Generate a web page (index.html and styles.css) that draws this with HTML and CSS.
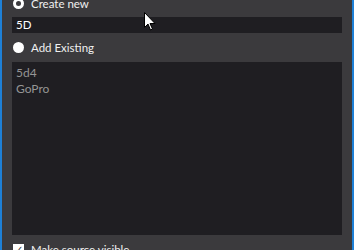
FILE: index.html
```html
<!DOCTYPE html>
<html lang="en">
<head>
    <meta charset="UTF-8">
    <title>Source picker</title>
    <link rel="stylesheet" href="styles.css">
</head>
<body>
    <div class="panel">
        <label class="option first">
            <span class="radio ring"></span>
            <span>Create new</span>
        </label>
        <div class="field">5D</div>

        <label class="option existing">
            <span class="radio dot"></span>
            <span>Add Existing</span>
        </label>
        <div class="list">
            <div class="item">5d4</div>
            <div class="item">GoPro</div>
        </div>

        <label class="option check-row">
            <span class="check">&#10003;</span>
            <span>Make source visible</span>
        </label>

        <!-- mouse pointer captured in the screenshot -->
        <svg class="cursor" width="12" height="19" viewBox="0 0 12 19">
            <path d="M0.5 0.5 L0.5 15.5 L4 12 L6.5 18 L8.5 17 L6 11.5 L11 11.5 Z" fill="#fff" stroke="#000" stroke-width="1"/>
        </svg>
    </div>
</body>
</html>
```

FILE: styles.css
```css
html, body {
    margin: 0;
    height: 100%;
    overflow: hidden;
    background: #3b3a3d;
}
.panel {
    position: relative;
    height: 250px;
    box-sizing: border-box;
    border-left: 2px solid #1e80d6;
    border-right: 2px solid #1e80d6;
    padding: 0 10px;
    font-family: Lato, "Noto Sans", sans-serif;
    font-size: 11.5px;
    color: #f0f0f0;
    display: flex;
    flex-direction: column;
}
.panel > * {
    flex-shrink: 0;
}
.option {
    display: flex;
    align-items: center;
    gap: 7px;
    height: 17px;
    padding-left: 1px;
}
.option.first {
    margin-top: -5px;
}
.option.existing {
    margin-top: 6px;
}
.radio {
    width: 11px;
    height: 11px;
    border-radius: 50%;
    box-sizing: border-box;
}
.radio.ring {
    border: 3px solid #fff;
}
.radio.dot {
    background: #fff;
}
.field {
    margin-top: 5px;
    height: 16px;
    line-height: 16px;
    background: #1f1e22;
    padding-left: 4px;
    color: #fff;
    font-size: 11.5px;
}
.list {
    margin-top: 6px;
    height: 173px;
    background: #1f1e22;
    padding: 3px 4px;
    box-sizing: border-box;
    color: #959595;
    font-size: 12px;
}
.item {
    height: 16px;
    line-height: 16px;
}
.check-row {
    margin-top: 6px;
}
.check {
    width: 11px;
    height: 11px;
    background: #fff;
    color: #333;
    font-size: 10px;
    line-height: 11px;
    text-align: center;
}
.cursor {
    position: absolute;
    left: 142px;
    top: 12px;
}
```
